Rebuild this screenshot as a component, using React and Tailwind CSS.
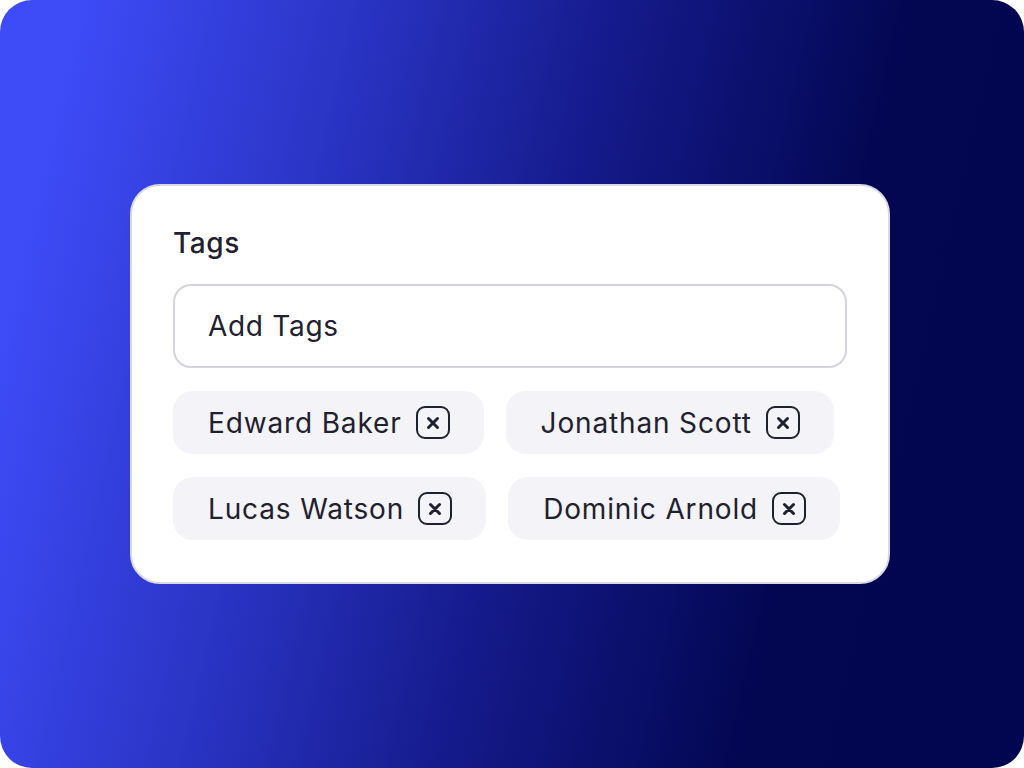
const tags = [
  ['Edward Baker', 'Jonathan Scott'],
  ['Lucas Watson', 'Dominic Arnold'],
];

function Chip({ name }) {
  return (
    <div className="flex items-center gap-[14px] h-[63px] pl-[35px] pr-[34px] rounded-[20px] bg-[#f3f3f8]">
      <span className="text-[28px] leading-none text-[#1f2130] tracking-[0.85px]">{name}</span>
      <span className="flex items-center justify-center w-[34px] h-[33px] rounded-[9px] border-2 border-[#1f2130]">
        <svg width="14" height="14" viewBox="0 0 14 14" fill="none">
          <path d="M2.5 2.5l9 9M11.5 2.5l-9 9" stroke="#1f2130" strokeWidth="3" strokeLinecap="round" />
        </svg>
      </span>
    </div>
  );
}

export default function App() {
  return (
    <div className="w-[1024px] h-[768px] bg-white font-['Inter',sans-serif]">
      <div className="w-full h-full rounded-[32px] flex items-center justify-center bg-[linear-gradient(103deg,#3e4cf8_6%,#2a34c4_30%,#141a8a_52%,#030752_76%,#020650_100%)]">
        <div className="w-[760px] h-[400px] mr-[4px] bg-white rounded-[30px] border-2 border-[#d9d9e4] pt-[43px] px-[41px] flex flex-col">
          <p className="text-[28px] leading-none font-medium text-[#1f2130] tracking-[0.6px] mb-[27px]">Tags</p>
          <div className="h-[84px] rounded-[18px] border-2 border-[#d4d4e0] flex items-center px-[33px]">
            <span className="text-[28px] leading-none text-[#1f2130] tracking-[0.7px]">Add Tags</span>
          </div>
          <div className="flex flex-col gap-[23px] mt-[23px]">
            {tags.map((row, i) => (
              <div key={i} className="flex gap-[22px]">
                {row.map(name => (
                  <Chip key={name} name={name} />
                ))}
              </div>
            ))}
          </div>
        </div>
      </div>
    </div>
  );
}
